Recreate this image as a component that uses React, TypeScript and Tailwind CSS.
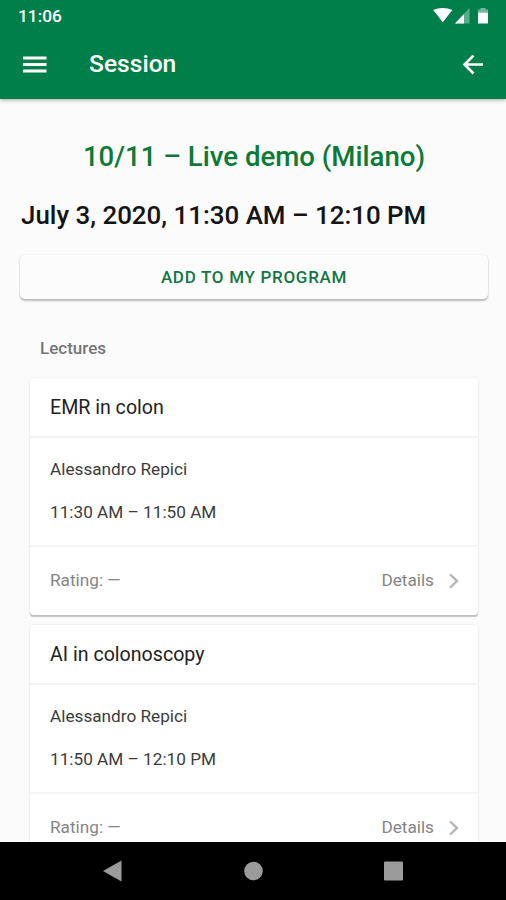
interface Lecture {
  title: string;
  speaker: string;
  time: string;
}

const lectures: Lecture[] = [
  {
    title: "EMR in colon",
    speaker: "Alessandro Repici",
    time: "11:30 AM – 11:50 AM",
  },
  {
    title: "AI in colonoscopy",
    speaker: "Alessandro Repici",
    time: "11:50 AM – 12:10 PM",
  },
];

const StatusBar = () => (
  <div className="flex h-8 items-center justify-between pl-[18px] pr-[15px] text-white">
    <span className="pt-px text-[17.300px] font-medium leading-none">
      11:06
    </span>
    <svg width="58" height="18" viewBox="0 0 58 18" fill="currentColor">
      <path d="M.200 3C5.500.2 14 .2 19.300 3L9.800 15.300z" />
      <path d="M36.500 1v15.500H22z" opacity="0.35" />
      <path d="M31 7v9.500H22z" />
      <path d="M47.500 1h5v1.500H55v3H45v-3h2.500z" opacity="0.45" />
      <path d="M45 5.500h10v11H45z" />
    </svg>
  </div>
);

const Toolbar = () => (
  <div className="flex h-[67px] items-center pb-[2px] pl-[23px] pr-[22px] text-white">
    <button aria-label="Menu">
      <svg width="24" height="17" viewBox="0 0 24 17" fill="currentColor">
        <path d="M0 .5h23.500v3H0zM0 7h23.500v3H0zM0 13.500h23.500v3H0z" />
      </svg>
    </button>
    <h1 className="ml-[42px] flex-1 text-[24.600px] font-medium leading-none">
      Session
    </h1>
    <button aria-label="Back">
      <svg
        width="22"
        height="20"
        viewBox="0 0 22 20"
        fill="none"
        stroke="currentColor"
        strokeWidth="2.600"
      >
        <path d="M21 9.500H2.500M11.500.5L2.500 9.500l9 9" />
      </svg>
    </button>
  </div>
);

const LectureCard = ({ title, speaker, time }: Lecture) => (
  <article className="rounded-[4px] bg-white shadow-[0_2px_1px_-0.500px_rgba(0,0,0,0.22),0_0_3px_rgba(0,0,0,0.08)]">
    <h3 className="flex h-[60px] items-center border-b-2 border-[#f3f3f3] px-5 pt-px text-[19.600px] text-[#222]">
      {title}
    </h3>
    <div className="flex h-[109px] flex-col gap-[19px] border-b-2 border-[#f6f6f6] px-5 pt-[19px] text-[17.200px] leading-6 text-[#3c3c3c]">
      <p>{speaker}</p>
      <p>{time}</p>
    </div>
    <div className="flex h-[68px] items-center px-5 pb-px text-[17.200px] text-[#858585]">
      <span className="flex-1">Rating: —</span>
      <span>Details</span>
      <svg
        className="ml-[15px] -mr-px"
        width="10"
        height="16"
        viewBox="0 0 10 16"
        fill="none"
        stroke="#b5b5b5"
        strokeWidth="2.300"
      >
        <path d="M1 1.300L8 8l-7 6.700" />
      </svg>
    </div>
  </article>
);

const NavigationBar = () => (
  <nav className="flex h-[58px] shrink-0 items-center bg-black pl-[103px] text-[#9b9b9b]">
    <svg width="301" height="22" viewBox="0 0 301 22" fill="currentColor">
      <path d="M0 11L18.500.5v21z" />
      <circle cx="150.500" cy="11" r="9.300" />
      <rect x="281" y="1.500" width="19" height="19" rx="1" />
    </svg>
  </nav>
);

const App = () => (
  <div className="flex h-[900px] w-[506px] flex-col overflow-hidden bg-[#fbfbfb] font-[Roboto,sans-serif]">
    <header className="relative h-[99px] shrink-0 bg-[#017f4b] shadow-[0_1px_4px_rgba(0,0,0,0.35)]">
      <StatusBar />
      <Toolbar />
    </header>

    <main className="min-h-0 flex-1 overflow-hidden pl-5 pr-[18px] pt-[42px]">
      <h2 className="text-center text-[27.600px] font-medium leading-8 text-[#0c7a35]">
        10/11 – Live demo (Milano)
      </h2>
      <p className="ml-px mt-[26px] whitespace-nowrap text-[25.900px] font-medium leading-8 text-[#141414]">
        July 3, 2020, 11:30 AM – 12:10 PM
      </p>
      <button className="mt-6 block h-11 w-full rounded-[5px] bg-[#fcfcfc] pt-px text-[17px] font-medium tracking-[0.700px] text-[#14763f] shadow-[0_1.500px_2px_rgba(0,0,0,0.25),0_0_2px_rgba(0,0,0,0.07)]">
        ADD TO MY PROGRAM
      </button>

      <h4 className="ml-5 mt-[37px] text-[17px] font-medium leading-6 text-[#757575]">
        Lectures
      </h4>
      <div className="mx-2.5 mt-[18px] flex flex-col gap-[10px]">
        {lectures.map((lecture) => (
          <LectureCard key={lecture.title} {...lecture} />
        ))}
      </div>
    </main>

    <NavigationBar />
  </div>
);

export default App;
